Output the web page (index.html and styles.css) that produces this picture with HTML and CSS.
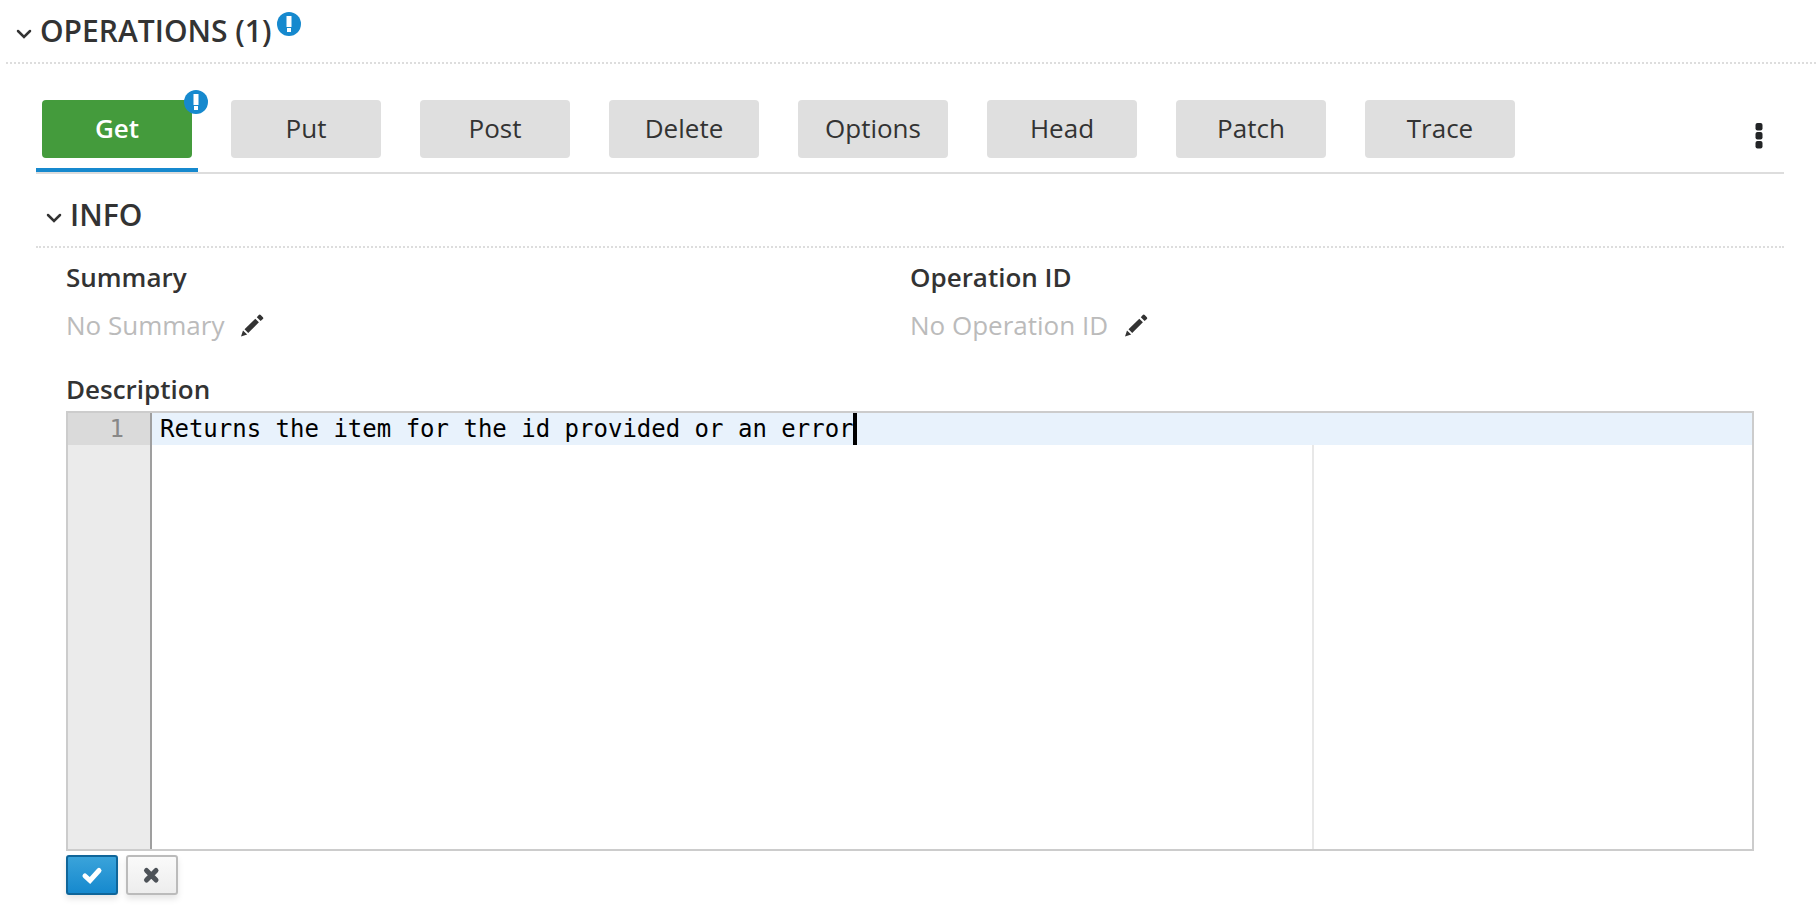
FILE: index.html
```
<!DOCTYPE html>
<html lang="en">
<head>
<meta charset="utf-8">
<title>Operations</title>
<link rel="stylesheet" href="styles.css">
</head>
<body>
<main class="operations">
  <h2 class="section-title">
    <button class="toggle" type="button" aria-expanded="true">
      <svg class="chevron" viewBox="0 0 16 10" aria-hidden="true"><path d="M2 2l6 6 6-6"/></svg>
      <span>OPERATIONS (1)</span>
    </button>
    <svg class="badge title-badge" viewBox="0 0 24 24" role="img" aria-label="Has problems"><circle cx="12" cy="12" r="12"/><path d="M9.500 4h5v11h-5zM10 16h4v4h-4z"/></svg>
  </h2>

  <div class="operations-body">
    <div class="tab-bar">
      <div class="tabs" role="tablist">
        <div class="tab tab-active">
          <button class="method method-get" type="button" role="tab" aria-selected="true">Get</button>
          <svg class="badge tab-badge" viewBox="0 0 24 24" role="img" aria-label="Has problems"><circle cx="12" cy="12" r="12"/><path d="M9.500 4h5v11h-5zM10 16h4v4h-4z"/></svg>
        </div>
        <div class="tab"><button class="method" type="button" role="tab">Put</button></div>
        <div class="tab"><button class="method" type="button" role="tab">Post</button></div>
        <div class="tab"><button class="method" type="button" role="tab">Delete</button></div>
        <div class="tab"><button class="method" type="button" role="tab">Options</button></div>
        <div class="tab"><button class="method" type="button" role="tab">Head</button></div>
        <div class="tab"><button class="method" type="button" role="tab">Patch</button></div>
        <div class="tab"><button class="method" type="button" role="tab">Trace</button></div>
      </div>
      <button class="kebab" type="button" aria-label="More actions">
        <svg viewBox="0 0 8 26" aria-hidden="true"><rect x="0.500" y="0" width="7" height="7.500" rx="2"/><rect x="0.500" y="9" width="7" height="7.500" rx="2"/><rect x="0.500" y="18" width="7" height="7.500" rx="2"/></svg>
      </button>
    </div>

    <section>
      <h3 class="section-title info-title">
        <button class="toggle" type="button" aria-expanded="true">
          <svg class="chevron" viewBox="0 0 16 10" aria-hidden="true"><path d="M2 2l6 6 6-6"/></svg>
          <span>INFO</span>
        </button>
      </h3>
      <div class="info">
        <div class="fields">
          <div class="field">
            <span class="label">Summary</span>
            <div class="value">
              <span>No Summary</span>
              <button class="edit" type="button" aria-label="Edit summary"><svg viewBox="0 0 24 24" aria-hidden="true"><path d="M1 23.500l2-6 4.200 4zM4.500 16.200L15.300 5.700l3.600 3.600L8.200 19.900zM16.800 4.300L18.800 2q1-.8 1.900 0l2.200 2.200q.8 1 0 1.900L20.600 8z"/></svg></button>
            </div>
          </div>
          <div class="field">
            <span class="label">Operation ID</span>
            <div class="value">
              <span>No Operation ID</span>
              <button class="edit" type="button" aria-label="Edit operation ID"><svg viewBox="0 0 24 24" aria-hidden="true"><path d="M1 23.500l2-6 4.200 4zM4.500 16.200L15.300 5.700l3.600 3.600L8.200 19.900zM16.800 4.300L18.800 2q1-.8 1.900 0l2.200 2.200q.8 1 0 1.900L20.600 8z"/></svg></button>
            </div>
          </div>
        </div>

        <label class="label description-label" for="description">Description</label>
        <div class="editor">
          <div class="gutter"><div class="line-number">1</div></div>
          <div class="code">
            <textarea class="source" id="description" spellcheck="false">Returns the item for the id provided or an error</textarea>
            <span class="caret"></span>
          </div>
        </div>
        <div class="actions">
          <button class="action action-save" type="button" aria-label="Save"><svg viewBox="0 0 20 16" aria-hidden="true"><path d="M3 9l5 4.500L17 3.500"/></svg></button>
          <button class="action" type="button" aria-label="Cancel"><svg viewBox="0 0 20 16" aria-hidden="true"><path d="M4.500 3.500l9.500 9.500M14 3.500L4.500 13"/></svg></button>
        </div>
      </div>
    </section>
  </div>
</main>
</body>
</html>
```
FILE: styles.css
```
* {
  box-sizing: border-box;
}

body {
  margin: 0;
  background: #fff;
  color: #333;
  font: 26px/32px "Open Sans", "Noto Sans", sans-serif;
}

button {
  margin: 0;
  padding: 0;
  border: 0;
  background: none;
  color: inherit;
  font: inherit;
  cursor: pointer;
}

svg {
  display: block;
}

.operations {
  padding-left: 6px;
}

.section-title {
  display: flex;
  margin: 0;
  height: 64px;
  padding-left: 10px;
  border-bottom: 2px dotted #ddd;
  font-size: 30px;
  font-weight: 600;
}

.toggle {
  display: flex;
  align-items: center;
  gap: 8px;
}

.chevron {
  width: 16px;
  height: 10px;
  margin-top: 5px;
  fill: none;
  stroke: #333;
  stroke-width: 2.500;
  stroke-linecap: round;
}

.badge {
  width: 24px;
  height: 24px;
}

.badge circle {
  fill: #1689ce;
}

.badge path {
  fill: #fff;
}

.title-badge {
  margin: 12px 0 0 6px;
}

.operations-body {
  padding: 0 32px 0 30px;
}

.tab-bar {
  display: flex;
  justify-content: space-between;
  align-items: flex-end;
  padding-top: 36px;
  border-bottom: 2px solid #ddd;
}

.tabs {
  display: flex;
  gap: 27px;
}

.tab {
  position: relative;
  padding: 0 6px 10px;
  border-bottom: 4px solid transparent;
}

.tab-active {
  border-color: #1689ce;
}

.method {
  width: 150px;
  height: 58px;
  padding-bottom: 3px;
  border-radius: 4px;
  background: #dfdfdf;
}

.method-get {
  background: #449b3c;
  color: #fff;
  font-weight: 600;
}

.tab-badge {
  position: absolute;
  top: -10px;
  right: -10px;
}

.kebab {
  padding: 0 21px 23px;
}

.kebab svg {
  width: 8px;
  height: 26px;
  fill: #222426;
}

.info-title {
  height: 74px;
  padding-top: 10px;
}

.info {
  padding: 13px 30px 24px;
}

.fields {
  display: grid;
  grid-template-columns: 1fr 1fr;
}

.label {
  display: block;
  font-weight: 600;
}

.value {
  display: flex;
  align-items: center;
  gap: 16px;
  margin-top: 16px;
  color: #bbb;
}

.edit svg {
  width: 24px;
  height: 24px;
  fill: #333;
}

.description-label {
  margin: 32px 0 6px;
}

.editor {
  display: flex;
  height: 440px;
  border: 2px solid #ccc;
  font: 24px/32px "DejaVu Sans Mono", monospace;
}

.gutter {
  width: 84px;
  border-right: 2px solid #9f9f9f;
  background: #ebebeb;
}

.line-number {
  padding-right: 26px;
  background: #dadada;
  color: #888;
  text-align: right;
}

.code {
  position: relative;
  flex: 1;
}

.source {
  display: block;
  width: 100%;
  height: 100%;
  padding: 0 8px;
  border: 0;
  outline: 0;
  resize: none;
  background:
    linear-gradient(#e8f2fc, #e8f2fc) 0 0 / 100% 32px no-repeat,
    linear-gradient(#e8e8e8, #e8e8e8) 1160px 0 / 2px 100% no-repeat;
  color: #000;
  font: inherit;
}

.caret {
  position: absolute;
  top: 0;
  left: calc(7px + 48ch);
  width: 4px;
  height: 32px;
  background: #000;
}

.actions {
  display: flex;
  gap: 8px;
  margin-top: 4px;
}

.action {
  display: flex;
  align-items: center;
  justify-content: center;
  width: 52px;
  height: 40px;
  border: 2px solid #bbb;
  border-radius: 3px;
  background: linear-gradient(#fafafa, #ededed);
  box-shadow: 0 4px 6px rgba(3, 3, 3, 0.1);
}

.action svg {
  width: 20px;
  height: 16px;
  overflow: visible;
  fill: none;
  stroke: #4d5258;
  stroke-width: 5;
  stroke-linecap: round;
}

.action-save {
  border-color: #0f6599;
  background: linear-gradient(#3aa3da, #1689ce);
}

.action-save svg {
  stroke: #fff;
}
```
